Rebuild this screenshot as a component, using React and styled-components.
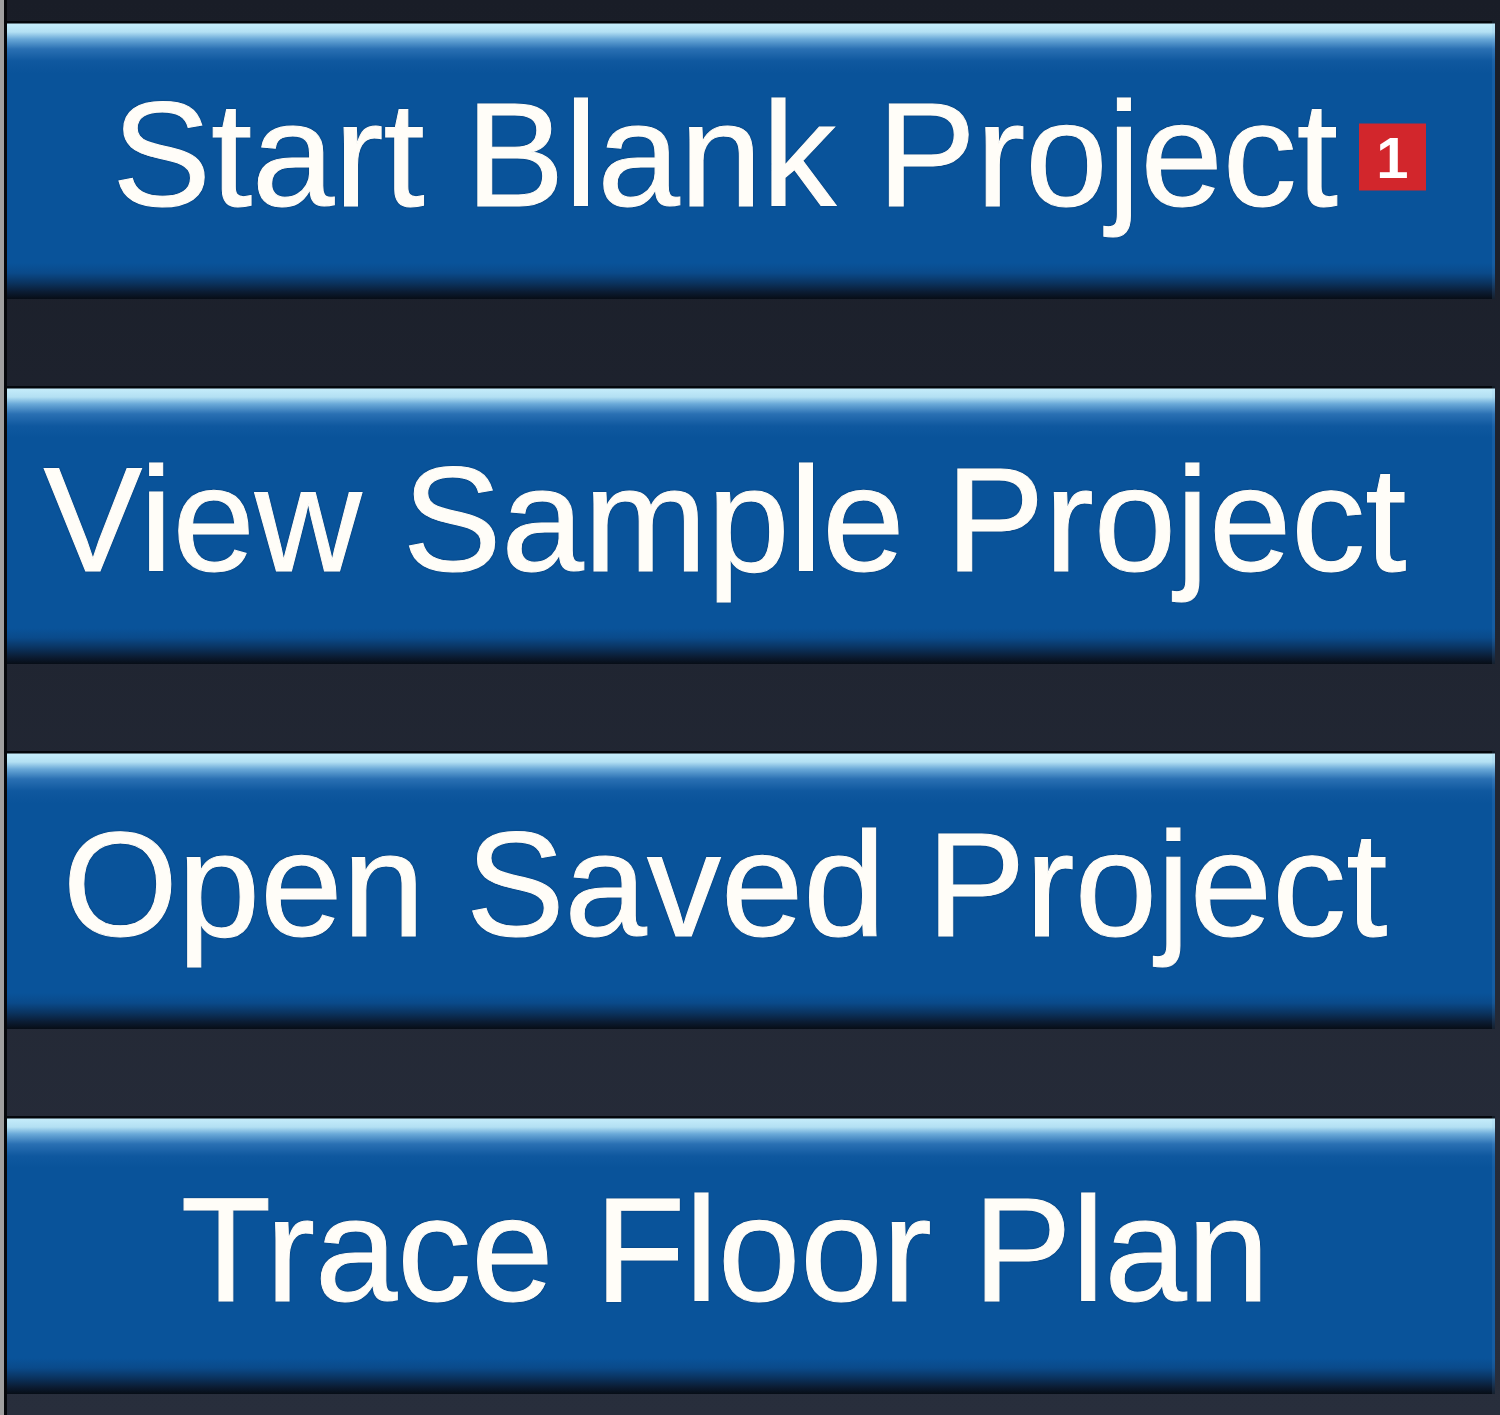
import React from "react";
import styled, { createGlobalStyle } from "styled-components";

const GlobalStyle = createGlobalStyle`
    html, body {
        margin: 0;
        padding: 0;
        background: #1b1f29;
    }
    * {
        box-sizing: border-box;
    }
`;

const Frame = styled.div`
    width: 1500px;
    height: 1415px;
    border-left: 4px solid #a0a0a0;
    background: linear-gradient(to bottom, #191d27 0%, #1f2430 40%, #282e3c 100%);
    overflow: hidden;
`;

const Menu = styled.div`
    height: 100%;
    border-left: 3px solid #05070b;
    padding: 21px 5px 0 0;
    display: flex;
    flex-direction: column;
    gap: 87px;
`;

const MenuButton = styled.button`
    flex: 0 0 278px;
    height: 278px;
    width: 100%;
    border: none;
    margin: 0;
    padding: 0 52px 10px 0;
    display: flex;
    align-items: center;
    justify-content: center;
    cursor: pointer;
    background: linear-gradient(
        to bottom,
        #04070c 0px,
        #04070c 2px,
        #c4ecfa 3px,
        #b3e0f3 11px,
        #6aa9d8 18px,
        #2a70b3 28px,
        #0f589f 40px,
        #09539a 52px,
        #09539a 242px,
        #0a4a8a 252px,
        #0a335f 262px,
        #0b1c33 271px,
        #070d16 278px
    );
    box-shadow: inset -3px 0 0 rgba(120, 170, 220, 0.12);
`;

const Label = styled.span`
    position: relative;
    font-family: "Liberation Sans", Arial, sans-serif;
    font-size: 148px;
    line-height: 1;
    color: #fffdf8;
    white-space: nowrap;
    -webkit-text-stroke: 1px #fffdf8;
    text-shadow: 0 0 2px rgba(0, 20, 50, 0.8);
`;

const Badge = styled.span`
    position: absolute;
    left: calc(100% + 21px);
    top: calc(50% + 2px);
    transform: translateY(-50%);
    width: 67px;
    height: 67px;
    background: #d2262c;
    color: #ffffff;
    font-family: "Liberation Sans", Arial, sans-serif;
    font-weight: bold;
    font-size: 58px;
    line-height: 67px;
    text-align: center;
    text-shadow: none;
    -webkit-text-stroke: 0;
`;

const items = [
    { label: "Start Blank Project", badge: 1 },
    { label: "View Sample Project" },
    { label: "Open Saved Project" },
    { label: "Trace Floor Plan" },
];

export default function App() {
    return (
        <>
            <GlobalStyle />
            <Frame>
                <Menu>
                    {items.map((item) => (
                        <MenuButton key={item.label}>
                            <Label>
                                {item.label}
                                {item.badge && <Badge>{item.badge}</Badge>}
                            </Label>
                        </MenuButton>
                    ))}
                </Menu>
            </Frame>
        </>
    );
}
